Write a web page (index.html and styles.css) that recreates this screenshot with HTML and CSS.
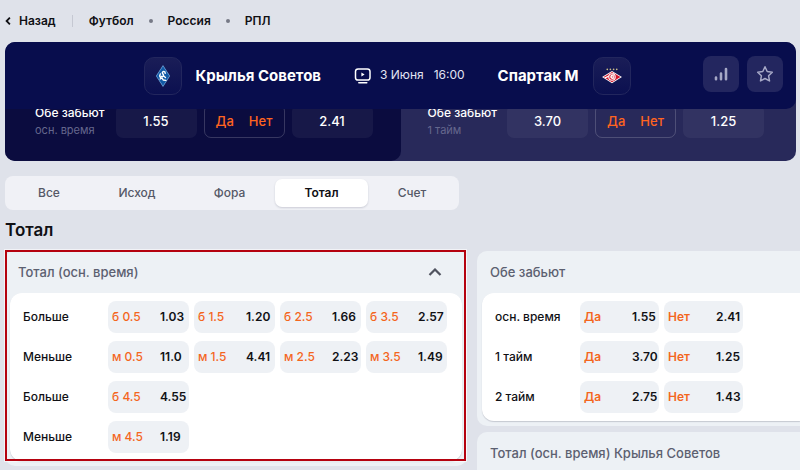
FILE: index.html
```html
<!DOCTYPE html>
<html lang="ru">
<head>
<meta charset="utf-8">
<meta name="viewport" content="width=device-width, initial-scale=1">
<title>Крылья Советов — Спартак М</title>
<link rel="stylesheet" href="styles.css">
</head>
<body>
<div class="page">
  <nav class="crumbs">
    <a class="back" href="#"><svg class="back-icon" viewBox="0 0 6 8" aria-hidden="true"><path d="M4.900 0.700 1.600 4l3.300 3.300"/></svg>Назад</a>
    <span class="divider"></span>
    <a href="#">Футбол</a>
    <span class="dot"></span>
    <a href="#">Россия</a>
    <span class="dot"></span>
    <a href="#">РПЛ</a>
  </nav>

  <section class="match">
    <header class="match-bar">
      <div class="teams">
        <span class="crest">
          <svg viewBox="0 0 38 38" aria-hidden="true">
            <path d="M19 7.500 26.500 19 19 30.500 11.500 19z" fill="#6fa3d8"/>
            <path d="M19 8.800 25.600 19 19 29.200 12.400 19z" fill="#125aa6"/>
            <g fill="none" stroke="#fff" stroke-width="1.500" stroke-linecap="round" stroke-linejoin="round">
              <path d="M21.300 16.200c.3-2.200-3-2.600-3-.6 0 1.200 1.400 1.500 1.200 3-.2 1.300-1.800 1.500-2.600.6"/>
              <path d="M16.200 16.800c-.9 1.300-.8 2.600 0 3.700M16 22.200l1.800-1.200 1.400 2.200 2.800.4M19.600 19l2 1.600"/>
            </g>
          </svg>
        </span>
        <strong class="team">Крылья Советов</strong>
        <div class="when">
          <svg class="tv" viewBox="0 0 18 16" aria-hidden="true">
            <rect x="1.500" y="1" width="14.500" height="11" rx="2.600"/>
            <path d="M4.800 14.800h8"/>
            <path class="tv-play" d="M7.400 4.600v3.800l3.200-1.900z"/>
          </svg>
          <span>3 Июня</span>
          <time>16:00</time>
        </div>
        <strong class="team">Спартак М</strong>
        <span class="crest">
          <svg viewBox="0 0 38 38" aria-hidden="true">
            <g fill="#c9bd8a"><circle cx="14" cy="12" r=".9"/><circle cx="17.300" cy="12" r=".9"/><circle cx="20.700" cy="12" r=".9"/><circle cx="24" cy="12" r=".9"/></g>
            <path d="M19 13.800 29.500 20 19 26.600 8.500 20z" fill="#fff"/>
            <path d="M19 14.800 27.900 20 19 25.600 10.100 20z" fill="#d3142d"/>
            <path d="m10.800 20.600 10-4.600 1.600.8-10 4.700z" fill="#fff"/>
            <g fill="none" stroke="#fff" stroke-width="1.100">
              <circle cx="19" cy="20" r="3.400" fill="#d3142d"/>
              <path d="M20.800 18.600c-1.200-1.500-3.300-.4-3.100 1.400.2 1.600 2 2 3 1M19 18v4M20.800 19v3"/>
            </g>
          </svg>
        </span>
      </div>
      <div class="actions">
        <button class="action" type="button" aria-label="Статистика">
          <svg viewBox="0 0 18 18" aria-hidden="true"><path class="bars" d="M4 14.200v-1.700M9 14.200V8.500M14 14.200V4"/></svg>
        </button>
        <button class="action" type="button" aria-label="В избранное">
          <svg viewBox="0 0 18 18" aria-hidden="true"><path class="star" d="m9 1.800 2.200 4.700 5.100.7-3.700 3.600.9 5.100L9 13.500l-4.500 2.400.9-5.100-3.700-3.600 5.100-.7z"/></svg>
        </button>
      </div>
    </header>
    <div class="quick">
      <div class="quick-item quick-item-main">
        <div class="quick-label"><b>Обе забьют</b><small>осн. время</small></div>
        <button class="quick-odd" type="button">1.55</button>
        <div class="quick-pick"><span>Да</span><span>Нет</span></div>
        <button class="quick-odd" type="button">2.41</button>
      </div>
      <div class="quick-item">
        <div class="quick-label"><b>Обе забьют</b><small>1 тайм</small></div>
        <button class="quick-odd" type="button">3.70</button>
        <div class="quick-pick"><span>Да</span><span>Нет</span></div>
        <button class="quick-odd" type="button">1.25</button>
      </div>
    </div>
  </section>

  <div class="tabs">
    <button type="button">Все</button>
    <button type="button">Исход</button>
    <button type="button">Фора</button>
    <button type="button" class="active">Тотал</button>
    <button type="button">Счет</button>
  </div>

  <h1>Тотал</h1>

  <div class="markets">
    <section class="card highlighted">
      <header class="card-head">
        <h2>Тотал (осн. время)</h2>
        <button class="toggle" type="button" aria-label="Свернуть"><svg viewBox="0 0 14 8" aria-hidden="true"><path d="m1.500 7 5.500-5.500L12.500 7"/></svg></button>
      </header>
      <div class="rows">
        <div class="row">
          <span>Больше</span>
          <button class="odd" type="button"><i>б 0.5</i>1.03</button>
          <button class="odd" type="button"><i>б 1.5</i>1.20</button>
          <button class="odd" type="button"><i>б 2.5</i>1.66</button>
          <button class="odd" type="button"><i>б 3.5</i>2.57</button>
        </div>
        <div class="row">
          <span>Меньше</span>
          <button class="odd" type="button"><i>м 0.5</i>11.0</button>
          <button class="odd" type="button"><i>м 1.5</i>4.41</button>
          <button class="odd" type="button"><i>м 2.5</i>2.23</button>
          <button class="odd" type="button"><i>м 3.5</i>1.49</button>
        </div>
        <div class="row">
          <span>Больше</span>
          <button class="odd" type="button"><i>б 4.5</i>4.55</button>
        </div>
        <div class="row">
          <span>Меньше</span>
          <button class="odd" type="button"><i>м 4.5</i>1.19</button>
        </div>
      </div>
    </section>

    <div class="column">
      <section class="card">
        <header class="card-head"><h2>Обе забьют</h2></header>
        <div class="rows">
          <div class="row row-pair">
            <span>осн. время</span>
            <button class="odd" type="button"><i>Да</i>1.55</button>
            <button class="odd" type="button"><i>Нет</i>2.41</button>
          </div>
          <div class="row row-pair">
            <span>1 тайм</span>
            <button class="odd" type="button"><i>Да</i>3.70</button>
            <button class="odd" type="button"><i>Нет</i>1.25</button>
          </div>
          <div class="row row-pair">
            <span>2 тайм</span>
            <button class="odd" type="button"><i>Да</i>2.75</button>
            <button class="odd" type="button"><i>Нет</i>1.43</button>
          </div>
        </div>
      </section>
      <section class="card">
        <header class="card-head"><h2>Тотал (осн. время) Крылья Советов</h2></header>
      </section>
    </div>
  </div>
</div>
</body>
</html>
```
FILE: styles.css
```css
* {
  box-sizing: border-box;
}

body {
  height: 100vh;
  margin: 0;
  overflow: hidden;
  background: #dfe2ea;
  color: #101014;
  font: 500 12px/16px Inter, "Liberation Sans", sans-serif;
}

button {
  margin: 0;
  padding: 0;
  border: 0;
  background: none;
  color: inherit;
  font: inherit;
}

svg {
  display: block;
}

.page {
  padding: 0 4px 0 5px;
}

.crumbs {
  display: flex;
  align-items: center;
  height: 42px;
  font-weight: 600;
}

.crumbs a {
  color: inherit;
  text-decoration: none;
}

.back {
  display: flex;
  align-items: center;
  gap: 8px;
}

.back-icon {
  width: 6px;
  height: 8px;
  fill: none;
  stroke: #101014;
  stroke-width: 1.8;
}

.divider {
  width: 1px;
  height: 12px;
  margin: 0 16px;
  background: #c5c8d2;
}

.dot {
  width: 4px;
  height: 4px;
  margin: 0 15px;
  border-radius: 50%;
  background: #767986;
}

.match {
  overflow: hidden;
  border-radius: 10px;
  background: #28295a;
  color: #fff;
}

.match-bar {
  position: relative;
  z-index: 1;
  display: flex;
  align-items: center;
  height: 67px;
  padding: 0 13px 0 66px;
  border-radius: 0 0 10px 0;
  background: #080d4d;
}

.teams {
  display: flex;
  flex: 1;
  align-items: center;
  justify-content: center;
  gap: 14px;
}

.crest {
  width: 38px;
  height: 38px;
  border: 1px solid #22265d;
  border-radius: 10px;
  background: linear-gradient(#1a1d57, #0b1050);
}

.team {
  font-size: 15px;
  font-weight: 700;
}

.when {
  display: flex;
  align-items: center;
  gap: 8px;
  margin: 0 19px;
  color: #e3e4f2;
  font-weight: 400;
}

.when time {
  margin-left: 2px;
}

.when span,
.when time {
  padding-bottom: 2px;
}

.tv {
  width: 18px;
  height: 16px;
  fill: none;
  stroke: #fff;
  stroke-width: 1.5;
  stroke-linecap: round;
}

.tv-play {
  fill: #fff;
  stroke: none;
}

.actions {
  display: flex;
  gap: 8px;
  margin-bottom: 3px;
}

.action {
  display: grid;
  place-items: center;
  width: 36px;
  height: 36px;
  border-radius: 8px;
  background: #23265f;
}

.action svg {
  width: 18px;
  height: 18px;
  fill: none;
  stroke: #a6a8c6;
  stroke-linecap: round;
  stroke-linejoin: round;
}

.bars {
  stroke-width: 2.6;
}

.star {
  stroke-width: 1.5;
}

.quick {
  display: grid;
  grid-template-columns: 1fr 1fr;
  margin-top: -5px;
}

.quick-item {
  display: grid;
  grid-template-columns: 1fr repeat(3, 81px);
  align-items: start;
  gap: 7px;
  padding: 0 32px 22px 27px;
}

.quick-item-main {
  padding: 0 28px 22px 30px;
  border-radius: 0 0 10px 0;
  background: #0b0c3f;
}

.quick-label {
  display: flex;
  flex-direction: column;
  padding-top: 1px;
  white-space: nowrap;
}

.quick-label b {
  font-weight: 500;
}

.quick-label small {
  color: #65678d;
  font-size: 11px;
  font-weight: 400;
  line-height: 18px;
}

.quick-odd {
  height: 34px;
  border-radius: 7px;
  background: rgba(255, 255, 255, 0.05);
  font-size: 13px;
}

.quick-pick {
  display: flex;
  align-items: center;
  justify-content: center;
  gap: 15px;
  height: 34px;
  border: 1px solid rgba(255, 255, 255, 0.18);
  border-radius: 7px;
  color: #ff6420;
  font-size: 13px;
}

.tabs {
  display: grid;
  grid-template-columns: 82fr 94fr 91fr 93fr 88fr;
  max-width: 454px;
  height: 34px;
  margin-top: 15px;
  padding: 3px;
  border-radius: 8px;
  background: #f0f1f6;
  color: #555866;
}

.tabs button {
  border-radius: 7px;
}

.tabs .active {
  background: #fff;
  box-shadow: 0 1px 2px rgba(40, 45, 70, 0.18);
  color: #101014;
  font-weight: 600;
}

h1 {
  margin: 8px 0;
  font-size: 17px;
  font-weight: 600;
  line-height: 24px;
}

.markets {
  display: grid;
  grid-template-columns: 462fr 319fr;
  align-items: start;
  gap: 10px;
}

.column {
  display: grid;
  gap: 6px;
  margin: 1px -4px 0 0;
}

.card {
  padding: 0 5px 5px;
  border-radius: 10px;
  background: #edf1f5;
}

.column .card {
  padding-right: 0;
  border-radius: 10px 0 0 10px;
}

.column .rows {
  border-radius: 12px 0 0 12px;
}

.column .card-head {
  height: 42px;
}

.highlighted {
  position: relative;
}

.highlighted::after {
  position: absolute;
  inset: 0 1px 5px 0;
  border: 2px solid #b5020f;
  box-shadow: 0 0 0 1px rgba(255, 255, 255, 0.6);
  content: "";
  pointer-events: none;
}

.card-head {
  display: flex;
  align-items: center;
  justify-content: space-between;
  height: 43px;
  padding: 0 20px 0 8px;
}

h2 {
  margin: 0;
  color: #5c6070;
  font-size: 13px;
  font-weight: 500;
}

.toggle svg {
  width: 14px;
  height: 8px;
  fill: none;
  stroke: #50535f;
  stroke-width: 2.2;
}

.rows {
  display: grid;
  gap: 8px;
  padding: 8px 15px 8px 13px;
  border-radius: 12px;
  background: #fff;
  box-shadow: 0 1px 1px rgba(40, 45, 70, 0.2);
}

.row {
  display: grid;
  grid-template-columns: 80px repeat(4, 1fr);
  align-items: center;
  gap: 5px;
}

.row-pair {
  grid-template-columns: 80px 79px 79px;
}

.odd {
  display: flex;
  align-items: center;
  height: 32px;
  padding-left: 4px;
  border-radius: 8px;
  background: #eef1f5;
  font-weight: 600;
}

.odd i {
  flex: 0 0 48px;
  color: #f4661e;
  font-style: normal;
  font-weight: 500;
  text-align: left;
}

.row-pair i {
  font-weight: 600;
}
```
